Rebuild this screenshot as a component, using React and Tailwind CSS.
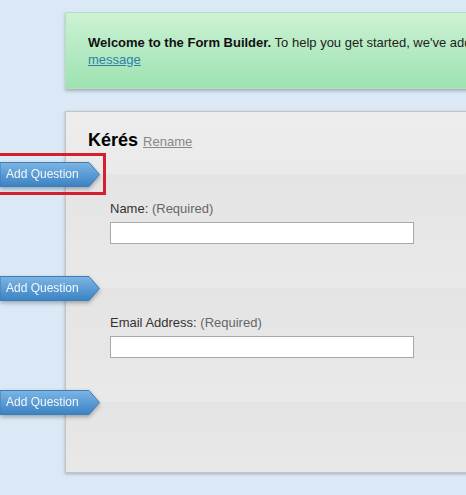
const FONT = { fontFamily: '"Liberation Sans", Arial, sans-serif' };

function AddQuestion({ highlighted }) {
  return (
    <div className="absolute left-[-66px] top-[-12px] h-[25px] w-[101px]">
      <div className="absolute inset-0 drop-shadow-[0_2px_2px_rgba(0,0,0,0.3)]">
        <svg width="101" height="25" viewBox="0 0 101 25" className="absolute inset-0">
          <defs>
            <linearGradient id="aqg" x1="0" y1="0" x2="0" y2="1">
              <stop offset="0" stopColor="#7db5e4" />
              <stop offset="1" stopColor="#3b82c4" />
            </linearGradient>
          </defs>
          <path d="M0 0.5 H89 L99.5 12.5 L89 24.5 H0 Z" fill="url(#aqg)" stroke="#3d7db8" strokeWidth="1" />
        </svg>
        <span className="relative block pl-[6px] text-[12px] leading-[25px] text-[#f2f7fc]">Add Question</span>
      </div>
      {highlighted && (
        <div className="absolute left-[-3px] top-[-9px] h-[42px] w-[109px] border-[3px] border-[#d4202e]" />
      )}
    </div>
  );
}

function Question({ label, highlighted }) {
  return (
    <div className="relative flex flex-col gap-[5px] bg-gradient-to-b from-[#e4e4e4] to-[#e9e9e9] pb-[44px] pl-[44px] pt-[27px]">
      <AddQuestion highlighted={highlighted} />
      <div className="text-[13px] leading-4 text-[#333]">
        {label}: <span className="text-[#666]">(Required)</span>
      </div>
      <div className="h-[22px] w-[304px] border border-[#a9a9a9] bg-white" />
    </div>
  );
}

export default function App() {
  return (
    <div className="h-[495px] w-full overflow-hidden bg-[#dbe9f6] pl-[65px] pt-3" style={FONT}>
      <div className="flex w-[640px] flex-col gap-[22px]">
        <div className="h-[77px] border border-[#b4dfbf] bg-gradient-to-b from-[#ccf2d4] to-[#9de2b0] pl-[22px] pt-[21px] text-[13px] leading-[17px] text-[#222] shadow-[0_2px_3px_rgba(0,0,0,0.25)]">
          <div className="whitespace-nowrap">
            <b className="text-[#111]">Welcome to the Form Builder.</b> To help you get started, we've added some
            questions below. Hide this
          </div>
          <a className="text-[#2f7fae] underline">message</a>
        </div>

        <div className="flex flex-col border border-[#c4c4c4] shadow-[0_1px_3px_rgba(0,0,0,0.25)]">
          <div className="flex h-[62px] items-baseline gap-[5px] bg-gradient-to-b from-[#ededed] to-[#eaeaea] pl-[22px] pt-[17px]">
            <span className="text-[18px] font-bold leading-[22px] text-black">Kérés</span>
            <span className="text-[13px] text-[#888] underline">Rename</span>
          </div>
          <Question label="Name" highlighted />
          <Question label="Email Address" />
          <div className="relative h-[70px] bg-gradient-to-b from-[#e4e4e4] to-[#e8e8e8]">
            <AddQuestion />
          </div>
        </div>
      </div>
    </div>
  );
}
